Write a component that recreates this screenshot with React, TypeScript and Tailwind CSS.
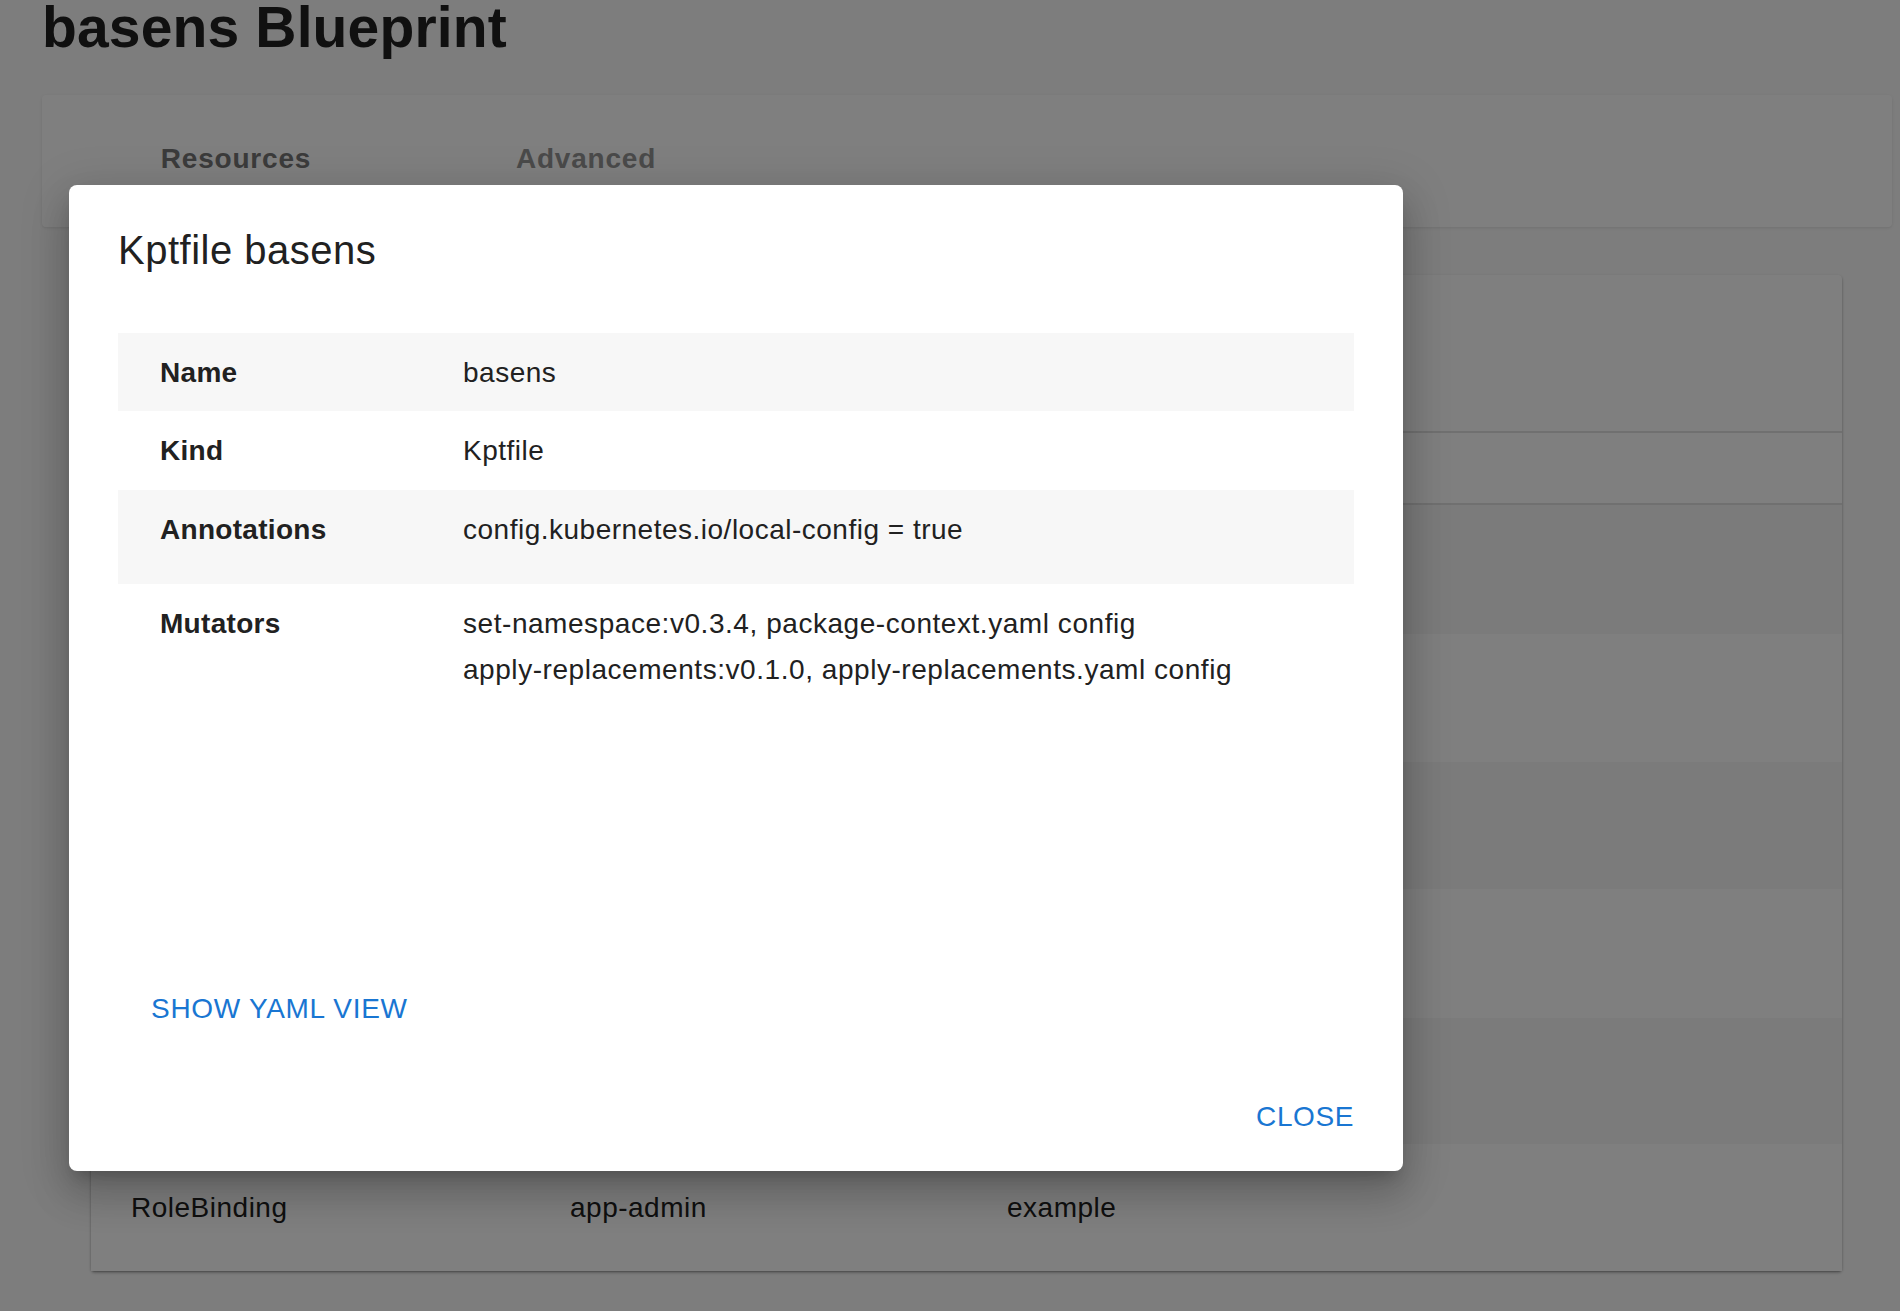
import React from "react";

const rows: { kind: string; name: string; ns: string; h: string; bg: string }[] = [
  { kind: "", name: "", ns: "", h: "h-[129px]", bg: "bg-[#f7f7f7]" },
  { kind: "", name: "", ns: "", h: "h-[128px]", bg: "bg-white" },
  { kind: "", name: "", ns: "", h: "h-[127px]", bg: "bg-[#f7f7f7]" },
  { kind: "", name: "", ns: "", h: "h-[129px]", bg: "bg-white" },
  { kind: "", name: "", ns: "", h: "h-[126px]", bg: "bg-[#f7f7f7]" },
  { kind: "RoleBinding", name: "app-admin", ns: "example", h: "h-[127px]", bg: "bg-white" },
];

export default function App() {
  return (
    <div className="relative w-[1900px] h-[1311px] overflow-hidden bg-[#fafafa] font-['Liberation_Sans',Arial,sans-serif] text-[#212121]">
      <div className="pl-[42px] pr-[8px]">
        <h1 className="text-[57px] leading-[54px] font-bold tracking-[0.15px] whitespace-nowrap">basens Blueprint</h1>

        <div className="mt-[41px] h-[132px] bg-white rounded-[4px] shadow-[0_1px_3px_0_rgba(0,0,0,0.10)] flex pl-[19px]">
          <div className="w-[350px] flex items-center justify-center pb-[4px] text-[28px] font-bold tracking-[0.8px] text-[#767676]">
            Resources
          </div>
          <div className="w-[350px] flex items-center justify-center pb-[4px] text-[28px] font-bold tracking-[0.8px] text-[#949494]">
            Advanced
          </div>
        </div>

        <div className="mt-[48px] ml-[49px] mr-[50px] bg-white rounded-[4px] shadow-[0_2px_3px_0_rgba(0,0,0,0.2),0_1px_1px_0_rgba(0,0,0,0.14),0_1px_3px_0_rgba(0,0,0,0.12)] tracking-[0.5px]">
          <div className="h-[158px] border-b-2 border-[#e0e0e0]" />
          <div className="h-[72px] border-b-2 border-[#e0e0e0]" />
          {rows.map((r, i) => (
            <div key={i} className={`${r.h} ${r.bg} flex items-center pl-[40px] text-[28px] leading-[40px]`}>
              <div className="w-[439px]">{r.kind}</div>
              <div className="w-[437px]">{r.name}</div>
              <div className="w-[439px]">{r.ns}</div>
            </div>
          ))}
        </div>
      </div>

      <div className="absolute inset-0 bg-black/50" />

      <div className="absolute left-[69px] top-[185px] w-[1334px] h-[986px] bg-white rounded-[8px] shadow-[0_11px_15px_-7px_rgba(0,0,0,0.2),0_24px_38px_3px_rgba(0,0,0,0.14),0_9px_46px_8px_rgba(0,0,0,0.12)] flex flex-col px-[49px]">
        <div className="pt-[33px] text-[40px] leading-[64px] tracking-[0.5px] text-[#212121]">Kptfile basens</div>

        <div className="mt-[51px] text-[28px] leading-[40px] text-[#212121]">
          <div className="h-[78px] bg-[#f7f7f7] flex pt-[20px]">
            <div className="w-[345px] pl-[42px] font-bold tracking-[0.3px]">Name</div>
            <div className="tracking-[0.5px]">basens</div>
          </div>
          <div className="h-[79px] bg-white flex pt-[20px]">
            <div className="w-[345px] pl-[42px] font-bold tracking-[0.3px]">Kind</div>
            <div className="tracking-[0.5px]">Kptfile</div>
          </div>
          <div className="h-[94px] bg-[#f7f7f7] flex pt-[20px]">
            <div className="w-[345px] pl-[42px] font-bold tracking-[0.3px]">Annotations</div>
            <div className="tracking-[0.5px]">config.kubernetes.io/local-config = true</div>
          </div>
          <div className="h-[106px] bg-white flex pt-[20px]">
            <div className="w-[345px] pl-[42px] font-bold tracking-[0.3px]">Mutators</div>
            <div className="tracking-[0.55px]">
              <div>set-namespace:v0.3.4, package-context.yaml config</div>
              <div className="mt-[6px]">apply-replacements:v0.1.0, apply-replacements.yaml config</div>
            </div>
          </div>
        </div>

        <div className="mt-[299px] pl-[33px] text-[28px] leading-[40px] tracking-[0.7px] text-[#1976d2] uppercase">
          Show YAML View
        </div>

        <div className="mt-[68px] flex justify-end text-[28px] leading-[40px] tracking-[0.6px] text-[#1976d2] uppercase">
          Close
        </div>
      </div>
    </div>
  );
}
